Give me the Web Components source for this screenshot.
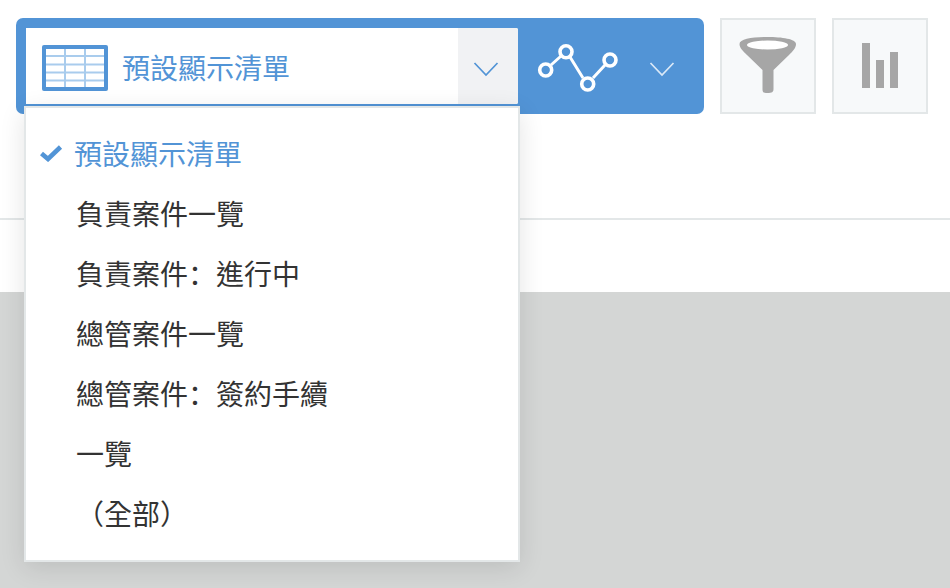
<!DOCTYPE html>
<html lang="zh-Hant">
<head>
<meta charset="utf-8">
<style>
html,body{margin:0;padding:0;background:#fff;height:588px;overflow:hidden}
body{font-family:"Noto Sans CJK TC","Liberation Sans",sans-serif;color:#333;position:relative}
</style>
</head>
<body>
<view-page>
  <view-toolbar slot="toolbar">
    <view-selector label="預設顯示清單"></view-selector>
    <icon-button kind="filter"></icon-button>
    <icon-button kind="chart"></icon-button>
  </view-toolbar>
</view-page>
<script>
const chevron = c => `<svg width="26" height="16" viewBox="0 0 26 16" fill="none"><path d="M1.5 2 L13 14 L24.5 2" stroke="${c}" stroke-width="1.7"/></svg>`;

customElements.define('view-page', class extends HTMLElement {
  constructor(){super();this.attachShadow({mode:'open'}).innerHTML=`
  <style>
    :host{display:flex;flex-direction:column;width:950px;height:588px}
    .top{height:218px;box-sizing:border-box}
    .line{height:2px;background:#e3e7e8}
    .mid{height:72px;background:#fff}
    .bottom{flex:1;background:#d4d6d5}
  </style>
  <div class="top"><slot name="toolbar"></slot></div>
  <div class="line"></div>
  <div class="mid"></div>
  <div class="bottom"></div>`;}
});

customElements.define('view-toolbar', class extends HTMLElement {
  constructor(){super();this.attachShadow({mode:'open'}).innerHTML=`
  <style>:host{display:flex;gap:16px;padding:18px 0 0 16px;align-items:flex-start}</style><slot></slot>`;}
});

customElements.define('view-selector', class extends HTMLElement {
  constructor(){super();
  const label=this.getAttribute('label');
  this.attachShadow({mode:'open'}).innerHTML=`
  <style>
    :host{display:block;position:relative;width:688px;height:96px}
    .bar{display:flex;box-sizing:border-box;width:688px;height:96px;background:#5294d6;border-radius:7px;padding:10px 0 10px 10px}
    .select{display:flex;width:492px;height:76px;background:#fff;border-radius:0 2px 2px 0;overflow:hidden}
    .name{flex:1;display:flex;align-items:center;gap:14px;padding:2px 0 0 16px;box-sizing:border-box;color:#5294d6;font-size:28px;white-space:nowrap}
    .name svg{flex:none;margin-top:2px}
    .arrow{width:60px;background:#f1f2f4;display:flex;align-items:center;justify-content:center;padding:6px 4px 0 0;box-sizing:border-box}
    .graph{width:120px;display:flex;align-items:center;justify-content:center}
    .graph svg{display:block}
    .more{flex:1;display:flex;align-items:center;padding:6px 0 0 11px;box-sizing:border-box}
  </style>
  <div class="bar">
    <div class="select">
      <div class="name">
        <svg width="66" height="46" viewBox="0 0 66 46">
          <rect x="0" y="0" width="66" height="46" rx="2" fill="#5294d6"/>
          <rect x="4" y="4" width="58" height="38" fill="#fff"/>
          <g stroke="#a9cced" stroke-width="2">
            <path d="M4 11H62M4 19.5H62M4 27.5H62M4 35.5H62"/>
            <path d="M23 4V42M43 4V42"/>
          </g>
        </svg>
        <span>${label}</span>
      </div>
      <div class="arrow">${chevron('#5294d6')}</div>
    </div>
    <div class="graph">
      <svg width="84" height="52" viewBox="0 0 84 52" fill="none" stroke="#fff" stroke-width="3">
        <path d="M15 25 L24.5 16.5 M34 17 L47 38 M57 38 L69 25"/>
        <g stroke-width="3.6">
          <circle cx="9.7" cy="30" r="6"/>
          <circle cx="30" cy="11.7" r="6"/>
          <circle cx="51.7" cy="44" r="6"/>
          <circle cx="74" cy="20" r="6"/>
        </g>
      </svg>
    </div>
    <div class="more">${chevron('#dbe9f7')}</div>
  </div>
  <view-menu></view-menu>`;}
});

customElements.define('view-menu', class extends HTMLElement {
  constructor(){super();
  const colon='<span lang="zh-Hans" style="font-family:\'Noto Sans CJK SC\',sans-serif">：</span>';
  const items=['負責案件一覽',`負責案件${colon}進行中`,'總管案件一覽',`總管案件${colon}簽約手續`,'一覽','（全部）'];
  this.attachShadow({mode:'open'}).innerHTML=`
  <style>
    :host{display:block;position:absolute;left:8px;top:88px;width:496px;box-sizing:border-box;height:456px;background:#fff;border:2px solid #e3e7e8;box-shadow:0 6px 24px rgba(0,0,0,.11);padding:15px 0 0}
  </style>
  <view-item selected>預設顯示清單</view-item>
  ${items.map(t=>`<view-item>${t}</view-item>`).join('')}`;}
});

customElements.define('view-item', class extends HTMLElement {
  constructor(){super();
  const sel=this.hasAttribute('selected');
  this.attachShadow({mode:'open'}).innerHTML=`
  <style>
    :host{display:flex;align-items:center;height:60px;font-size:28px;white-space:nowrap;color:${sel?'#5294d6':'#333'};padding-left:${sel?'13':'50'}px}
    svg{margin-right:11px;flex:none}
    div{display:block}
  </style>
  ${sel?`<svg width="24" height="18" viewBox="0 0 24 18"><path d="M2.5 9.5 L9 15 L21.5 3" fill="none" stroke="#5294d6" stroke-width="4.6"/></svg>`:''}
  <div><slot></slot></div>`;}
});

customElements.define('icon-button', class extends HTMLElement {
  constructor(){super();
  const kind=this.getAttribute('kind');
  const icons={
    filter:`<svg width="58" height="57" viewBox="0 0 58 57"><path d="M0.5 7 C0.5 2 14 0 28.5 0 C43 0 57 2 57 7 C57 11 54 14 50 18 L34.5 33 V52 C34.5 55 33 56 28.5 56 C24 56 23.5 55 23.5 52 V33 L8 18 C4 14 0.5 11 0.5 7Z" fill="#a6a6a6"/><ellipse cx="28.5" cy="8" rx="20.5" ry="4.5" fill="#fff"/></svg>`,
    chart:`<svg width="36" height="46" viewBox="0 0 36 46" fill="#a6a6a6"><rect x="0" y="0" width="8" height="45"/><rect x="14" y="17" width="8" height="28"/><rect x="28" y="9" width="8" height="36"/></svg>`
  };
  this.attachShadow({mode:'open'}).innerHTML=`
  <style>
    :host{display:flex;align-items:center;justify-content:center;box-sizing:border-box;width:96px;height:96px;background:#f7f9fa;border:2px solid #e3e7e8;${kind==='filter'?'padding-bottom:1px;':''}}
    svg{display:block}
  </style>
  ${icons[kind]}`;}
});
</script>
</body>
</html>
